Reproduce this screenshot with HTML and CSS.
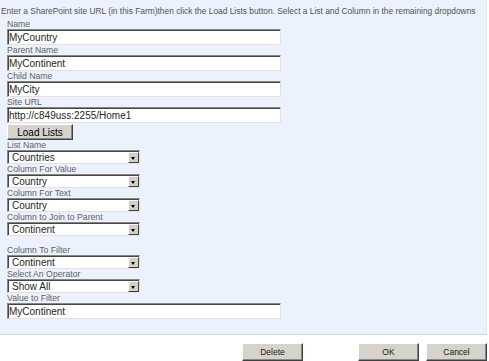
FILE: index.html
```html
<!DOCTYPE html>
<html>
<head lang="en">
    <meta charset="UTF-8">
    <title>Cascading lookup settings</title>
    <link rel="stylesheet" href="styles.css">
</head>
<body>

<div class="panel">
    <p class="intro">Enter a SharePoint site URL (in this Farm)then click the Load Lists button. Select a List and Column in the remaining dropdowns</p>

    <div class="form">
        <div class="field">
            <label>Name</label>
            <input type="text" class="text-input" value="MyCountry">
        </div>
        <div class="field">
            <label>Parent Name</label>
            <input type="text" class="text-input" value="MyContinent">
        </div>
        <div class="field">
            <label>Child Name</label>
            <input type="text" class="text-input" value="MyCity">
        </div>
        <div class="field">
            <label>Site URL</label>
            <input type="text" class="text-input" value="http://c849uss:2255/Home1">
        </div>

        <button class="btn load-btn">Load Lists</button>

        <div class="field">
            <label>List Name</label>
            <div class="drop"><span class="drop-text">Countries</span><span class="drop-arrow"></span></div>
        </div>
        <div class="field">
            <label>Column For Value</label>
            <div class="drop"><span class="drop-text">Country</span><span class="drop-arrow"></span></div>
        </div>
        <div class="field">
            <label>Column For Text</label>
            <div class="drop"><span class="drop-text">Country</span><span class="drop-arrow"></span></div>
        </div>
        <div class="field">
            <label>Column to Join to Parent</label>
            <div class="drop"><span class="drop-text">Continent</span><span class="drop-arrow"></span></div>
        </div>

        <div class="field filter-start">
            <label>Column To Filter</label>
            <div class="drop"><span class="drop-text">Continent</span><span class="drop-arrow"></span></div>
        </div>
        <div class="field">
            <label>Select An Operator</label>
            <div class="drop"><span class="drop-text">Show All</span><span class="drop-arrow"></span></div>
        </div>
        <div class="field">
            <label>Value to Filter</label>
            <input type="text" class="text-input" value="MyContinent">
        </div>
    </div>
</div>

<div class="actions">
    <button class="btn action-btn delete-btn">Delete</button>
    <button class="btn action-btn">OK</button>
    <button class="btn action-btn">Cancel</button>
</div>

</body>
</html>
```

FILE: styles.css
```css
html, body, p, div, label {
    margin: 0px;
    padding: 0px;
}

body {
    background: #ffffff;
    font-family: "Liberation Sans", Arial, sans-serif;
}

.panel {
    height: 335px;
    box-sizing: border-box;
    margin-right: 2px;
    background: #ebf2fd;
    border-right: 1px solid #e1e8f3;
    border-bottom: 1px solid #d5d5d5;
}

.intro {
    padding: 6px 0px 3px 1px;
    font-size: 8.4px;
    line-height: 10px;
    color: #535353;
    white-space: nowrap;
}

.form {
    padding-left: 7px;
}

.field label {
    display: block;
    height: 10px;
    font-size: 8.7px;
    line-height: 10px;
    color: #616161;
}

.text-input {
    display: block;
    width: 274px;
    height: 16px;
    box-sizing: border-box;
    margin: 0px;
    padding: 0px 1px;
    border: 1px solid;
    border-color: #858585 #e4e1da #e4e1da #858585;
    box-shadow: inset 1px 1px 0px #454545;
    background: #ffffff;
    font-family: "Liberation Sans", Arial, sans-serif;
    font-size: 10px;
    color: #262626;
    outline: none;
}

.drop {
    display: flex;
    width: 133px;
    height: 14px;
    box-sizing: border-box;
    border: 1px solid;
    border-color: #858585 #e4e1da #e4e1da #858585;
    box-shadow: inset 1px 1px 0px #454545;
    background: #ffffff;
}

.drop-text {
    flex: 1;
    padding: 1px 0px 0px 4px;
    font-size: 10px;
    line-height: 11px;
    color: #262626;
}

.drop-arrow {
    position: relative;
    width: 11px;
    margin: 1px 0px 0px 0px;
    box-sizing: border-box;
    background: #d4d0c8;
    border: 1px solid;
    border-color: #ffffff #404040 #404040 #ffffff;
}

.drop-arrow::after {
    content: "";
    position: absolute;
    left: 2px;
    top: 4px;
    border-left: 2.5px solid transparent;
    border-right: 2.5px solid transparent;
    border-top: 3px solid #000000;
}

.filter-start {
    margin-top: 9px;
}

.btn {
    display: block;
    margin: 0px;
    padding: 0px;
    box-sizing: border-box;
    background: #d6d3cc;
    border: 1px solid;
    border-color: #ffffff #404040 #404040 #ffffff;
    box-shadow: inset -1px -1px 0px #8a8782;
    font-family: "Liberation Sans", Arial, sans-serif;
    color: #000000;
}

.load-btn {
    width: 66px;
    height: 16px;
    margin-top: 1px;
    font-size: 10px;
    line-height: 13px;
}

.actions {
    display: flex;
    gap: 7px;
    padding: 8px 2px 0px 242px;
}

.action-btn {
    width: 61px;
    height: 18px;
    font-size: 8.5px;
    color: #1a1a1a;
}

.delete-btn {
    margin-right: auto;
}
```
